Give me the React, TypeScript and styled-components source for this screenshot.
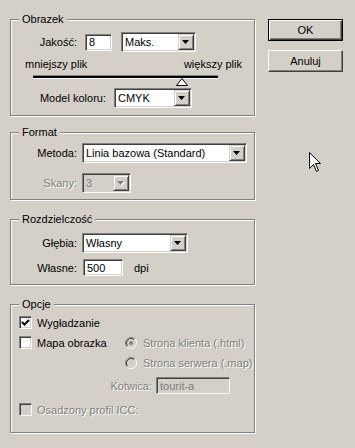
import React from "react";
import styled, { createGlobalStyle } from "styled-components";

// Style
const GlobalStyle = createGlobalStyle`
  html, body {
    margin: 0;
    background: #d4d0c8;
  }
  body {
    font-family: "Liberation Sans", Arial, sans-serif;
    font-size: 11px;
    color: #000;
  }
`;

const Dialog = styled.div`
  position: relative;
  display: flex;
  align-items: flex-start;
  box-sizing: border-box;
  width: 355px;
  height: 448px;
  padding: 19px 0 0 10px;
  background: #d4d0c8;
  overflow: hidden;
`;

const LeftColumn = styled.div`
  display: flex;
  flex-direction: column;
  width: 246px;
`;

const ButtonColumn = styled.div`
  display: flex;
  flex-direction: column;
  gap: 9px;
  margin-left: 12px;
`;

const Button = styled.div<{ $default?: boolean }>`
  box-sizing: border-box;
  width: 75px;
  height: 22px;
  display: flex;
  align-items: center;
  justify-content: center;
  background: #d4d0c8;
  border: 1px solid;
  border-color: ${(p) => (p.$default ? "#000" : "#fff #404040 #404040 #fff")};
  box-shadow: ${(p) =>
    p.$default
      ? "inset 1px 1px 0 #fff, inset -1px -1px 0 #404040, inset -2px -2px 0 #808080"
      : "inset -1px -1px 0 #808080"};
`;

const Group = styled.div<{ $h: number; $mt?: number }>`
  position: relative;
  box-sizing: border-box;
  width: 245px;
  height: ${(p) => p.$h}px;
  margin-top: ${(p) => p.$mt ?? 0}px;
  border: 1px solid #808080;
  box-shadow: 1px 1px 0 #fff, inset 1px 1px 0 #fff;
`;

const GroupTitle = styled.span`
  position: absolute;
  top: -7px;
  left: 8px;
  padding: 0 3px;
  line-height: 13px;
  background: #d4d0c8;
`;

const Row = styled.div<{ $mt: number; $h: number; $pl?: number }>`
  display: flex;
  align-items: center;
  height: ${(p) => p.$h}px;
  margin-top: ${(p) => p.$mt}px;
  padding-left: ${(p) => p.$pl ?? 0}px;
`;

const SizeRow = styled.div`
  display: flex;
  justify-content: space-between;
  align-items: center;
  height: 13px;
  margin-top: 5px;
  padding: 0 12px 0 14px;
`;

const Label = styled.span<{ $w: number; $gap: number; $disabled?: boolean }>`
  flex: none;
  width: ${(p) => p.$w}px;
  margin-right: ${(p) => p.$gap}px;
  text-align: right;
  white-space: nowrap;
  color: ${(p) => (p.$disabled ? "#808080" : "#000")};
  text-shadow: ${(p) => (p.$disabled ? "1px 1px 0 #fff" : "none")};
`;

const Sunken = styled.div<{ $w: number; $h: number; $disabled?: boolean }>`
  flex: none;
  box-sizing: border-box;
  display: flex;
  align-items: center;
  width: ${(p) => p.$w}px;
  height: ${(p) => p.$h}px;
  background: ${(p) => (p.$disabled ? "#d4d0c8" : "#fff")};
  border: 1px solid;
  border-color: #808080 #fff #fff #808080;
  box-shadow: inset 1px 1px 0 #404040, inset -1px -1px 0 #d4d0c8;
  color: ${(p) => (p.$disabled ? "#808080" : "#000")};
`;

const FieldText = styled.span`
  flex: 1;
  padding-left: 3px;
  white-space: nowrap;
  overflow: hidden;
`;

const DropButton = styled.div`
  box-sizing: border-box;
  flex: none;
  width: 16px;
  height: 16px;
  margin-right: 1px;
  display: flex;
  align-items: center;
  justify-content: center;
  background: #d4d0c8;
  border: 1px solid;
  border-color: #d4d0c8 #404040 #404040 #d4d0c8;
  box-shadow: inset 1px 1px 0 #fff, inset -1px -1px 0 #808080;
`;

const Gap = styled.span<{ $w: number }>`
  flex: none;
  width: ${(p) => p.$w}px;
`;

const SliderArea = styled.div`
  position: relative;
  height: 17px;
  margin-top: 1px;
`;

const Track = styled.div`
  position: relative;
  top: 5px;
  margin-left: 22px;
  width: 185px;
  height: 2px;
  background: #000;
  box-shadow: 0 -1px 0 #808080, 0 1px 0 #fff;
`;

const Thumb = styled.svg`
  position: absolute;
  left: 165px;
  top: 7px;
`;

const CheckItem = styled.div<{ $w?: number; $disabled?: boolean }>`
  flex: none;
  display: flex;
  align-items: center;
  gap: 5px;
  width: ${(p) => (p.$w ? `${p.$w}px` : "auto")};
  height: 13px;
  white-space: nowrap;
  color: ${(p) => (p.$disabled ? "#808080" : "#000")};
  text-shadow: ${(p) => (p.$disabled ? "1px 1px 0 #fff" : "none")};
`;

const Box = styled.div<{ $disabled?: boolean }>`
  flex: none;
  box-sizing: border-box;
  width: 13px;
  height: 13px;
  display: flex;
  align-items: center;
  justify-content: center;
  background: ${(p) => (p.$disabled ? "#d4d0c8" : "#fff")};
  border: 1px solid;
  border-color: #808080 #fff #fff #808080;
  box-shadow: inset 1px 1px 0 #404040, inset -1px -1px 0 #d4d0c8;
`;

const MapRow = styled.div`
  display: flex;
  align-items: flex-start;
  margin-top: 7px;
  padding-left: 8px;
`;

const RadioColumn = styled.div`
  display: flex;
  flex-direction: column;
  gap: 6px;
`;

const RadioItem = styled.div`
  display: flex;
  align-items: center;
  gap: 6px;
  height: 14px;
  white-space: nowrap;
  color: #808080;
  text-shadow: 1px 1px 0 #fff;
`;

const Unit = styled.span`
  margin-left: 11px;
`;

const Cursor = styled.svg`
  position: absolute;
  left: 309px;
  top: 152px;
`;

// Parts
const Arrow = ({ disabled }: { disabled?: boolean }) => (
  <svg width="8" height="5" viewBox="0 0 8 5">
    {disabled && <path d="M1 1 H8 L4.5 5 Z" fill="#fff" />}
    <path d="M0 0 H7 L3.5 4 Z" fill={disabled ? "#808080" : "#000"} />
  </svg>
);

const Combo = ({ w, value, disabled }: { w: number; value: string; disabled?: boolean }) => (
  <Sunken $w={w} $h={20} $disabled={disabled}>
    <FieldText>{value}</FieldText>
    <DropButton>
      <Arrow disabled={disabled} />
    </DropButton>
  </Sunken>
);

const Check = ({ checked, disabled }: { checked?: boolean; disabled?: boolean }) => (
  <Box $disabled={disabled}>
    {checked && (
      <svg width="9" height="9" viewBox="0 0 9 9">
        <path d="M1 4 L3.5 6.5 L8 2" fill="none" stroke="#000" strokeWidth="2" />
      </svg>
    )}
  </Box>
);

const Radio = ({ checked }: { checked?: boolean }) => (
  <svg width="12" height="12" viewBox="0 0 12 12">
    <circle cx="6" cy="6" r="4.5" fill="#d4d0c8" />
    <path d="M2.11 9.89 A5.5 5.5 0 0 1 9.89 2.11" fill="none" stroke="#808080" />
    <path d="M9.89 2.11 A5.5 5.5 0 0 1 2.11 9.89" fill="none" stroke="#fff" />
    <path d="M2.82 9.18 A4.5 4.5 0 0 1 9.18 2.82" fill="none" stroke="#404040" />
    <path d="M9.18 2.82 A4.5 4.5 0 0 1 2.82 9.18" fill="none" stroke="#d4d0c8" />
    {checked && <circle cx="6" cy="6" r="2" fill="#808080" />}
  </svg>
);

const App = () => {
  return (
    <>
      <GlobalStyle />
      <Dialog>
        <LeftColumn>
          <Group $h={97}>
            <GroupTitle>Obrazek</GroupTitle>
            <Row $mt={12} $h={20}>
              <Label $w={66} $gap={8}>Jakość:</Label>
              <Sunken $w={27} $h={17}>
                <FieldText>8</FieldText>
              </Sunken>
              <Gap $w={9} />
              <Combo w={75} value="Maks." />
            </Row>
            <SizeRow>
              <span>mniejszy plik</span>
              <span>większy plik</span>
            </SizeRow>
            <SliderArea>
              <Track />
              <Thumb width="12" height="8" viewBox="0 0 12 8">
                <path d="M6 0.5 L11.5 7.5 H0.5 Z" fill="#fff" stroke="#000" />
              </Thumb>
            </SliderArea>
            <Row $mt={0} $h={20}>
              <Label $w={95} $gap={8}>Model koloru:</Label>
              <Combo w={78} value="CMYK" />
            </Row>
          </Group>

          <Group $h={68} $mt={16}>
            <GroupTitle>Format</GroupTitle>
            <Row $mt={10} $h={20}>
              <Label $w={66} $gap={5}>Metoda:</Label>
              <Combo w={165} value="Linia bazowa (Standard)" />
            </Row>
            <Row $mt={10} $h={20}>
              <Label $w={66} $gap={5} $disabled>Skany:</Label>
              <Combo w={49} value="3" disabled />
            </Row>
          </Group>

          <Group $h={66} $mt={19}>
            <GroupTitle>Rozdzielczość</GroupTitle>
            <Row $mt={13} $h={20}>
              <Label $w={66} $gap={5}>Głębia:</Label>
              <Combo w={106} value="Własny" />
            </Row>
            <Row $mt={6} $h={17}>
              <Label $w={66} $gap={6}>Własne:</Label>
              <Sunken $w={40} $h={17}>
                <FieldText>500</FieldText>
              </Sunken>
              <Unit>dpi</Unit>
            </Row>
          </Group>

          <Group $h={129} $mt={19}>
            <GroupTitle>Opcje</GroupTitle>
            <Row $mt={11} $h={13} $pl={8}>
              <CheckItem>
                <Check checked />
                Wygładzanie
              </CheckItem>
            </Row>
            <MapRow>
              <CheckItem $w={106}>
                <Check />
                Mapa obrazka
              </CheckItem>
              <RadioColumn>
                <RadioItem>
                  <Radio checked />
                  Strona klienta (.html)
                </RadioItem>
                <RadioItem>
                  <Radio />
                  Strona serwera (.map)
                </RadioItem>
              </RadioColumn>
            </MapRow>
            <Row $mt={7} $h={17}>
              <Label $w={141} $gap={4} $disabled>Kotwica:</Label>
              <Sunken $w={74} $h={17} $disabled>
                <FieldText>tourit-a</FieldText>
              </Sunken>
            </Row>
            <Row $mt={9} $h={13} $pl={8}>
              <CheckItem $disabled>
                <Check disabled />
                Osadzony profil ICC:
              </CheckItem>
            </Row>
          </Group>
        </LeftColumn>

        <ButtonColumn>
          <Button $default>OK</Button>
          <Button>Anuluj</Button>
        </ButtonColumn>

        <Cursor width="13" height="22" viewBox="0 0 13 22">
          <path
            d="M0.5 0.5 V16.5 L4.5 12.5 L7.5 19.5 L9.5 18.5 L6.5 11.5 H11.5 Z"
            fill="#fff"
            stroke="#000"
          />
        </Cursor>
      </Dialog>
    </>
  );
};

export default App;
